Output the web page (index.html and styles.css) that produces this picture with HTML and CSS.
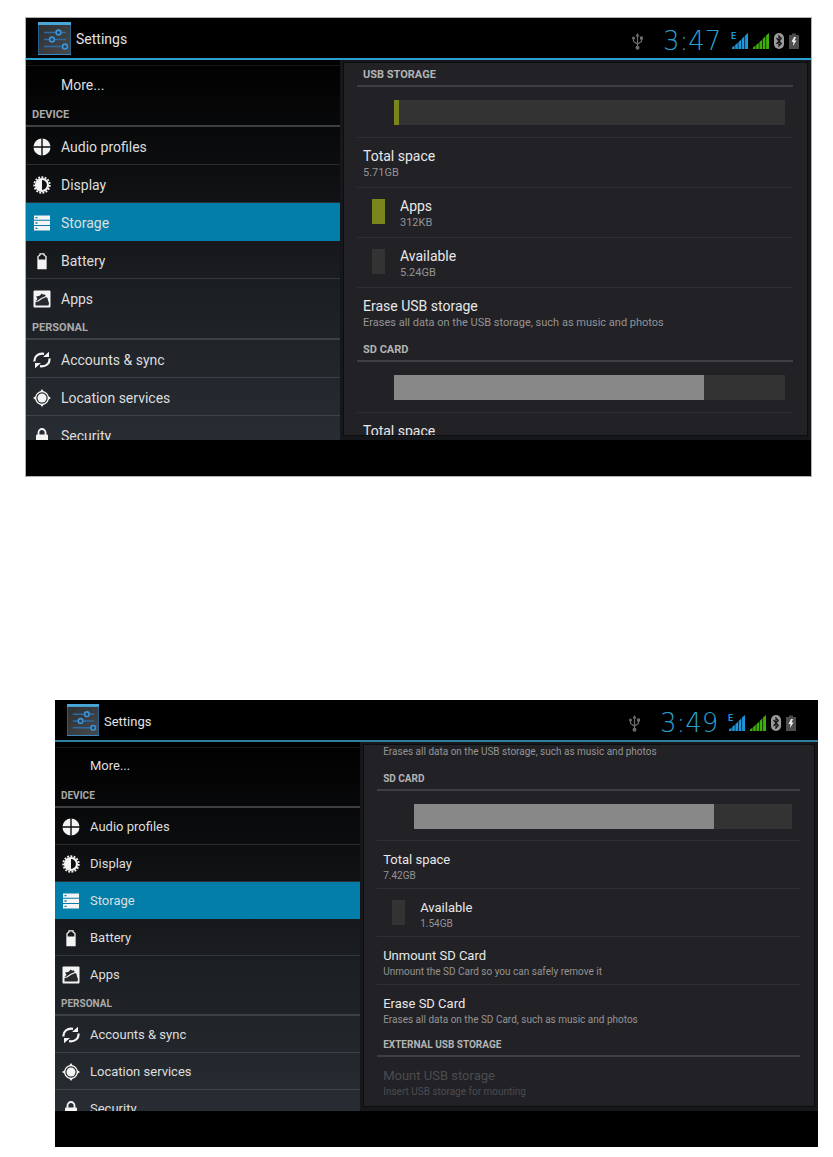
FILE: index.html
```html
<!DOCTYPE html>
<html lang="en">
  <head>
    <meta charset="UTF-8">
    <meta name="viewport" content="width=device-width, initial-scale=1">
    <title>Settings</title>
    <link rel="stylesheet" href="styles.css">
  </head>
  <body>
    <!-- shared icons -->
    <svg class="sprite" aria-hidden="true">
      <defs>
        <linearGradient id="tile" x1="0" y1="0" x2="1" y2="1">
          <stop offset="0" stop-color="#2c2f33"/>
          <stop offset="1" stop-color="#484a4c"/>
        </linearGradient>
      </defs>
      <symbol id="i-settings" viewBox="0 0 33 33">
        <rect x="0.5" y="0.5" width="32" height="32" fill="url(#tile)" stroke="#27618c"/>
        <rect x="0" y="0" width="33" height="3" fill="#48a6d8"/>
        <path d="M0 32.5H33" stroke="#3b86bd"/>
        <path d="M6 10.5H18M23 10.5H28M6 17.5H11M17 17.5H28M6 24.500H25" stroke="#2c6ca5" stroke-width="1.5"/>
        <g fill="#26435c" stroke="#3d93d4" stroke-width="1.6">
          <circle cx="20.500" cy="10.500" r="2.400"/>
          <circle cx="14" cy="17.500" r="2.400"/>
          <circle cx="27" cy="24.500" r="2.400"/>
        </g>
      </symbol>
      <symbol id="i-audio" viewBox="0 0 18 18">
        <path d="M8.300 8.300V0.500A8.500 8.500 0 0 0 0.500 8.300zM9.700 8.300H17.500A8.500 8.500 0 0 0 9.700 0.500zM8.300 9.700H0.500A8.500 8.500 0 0 0 8.300 17.500zM9.700 9.700V17.500A8.500 8.500 0 0 0 17.500 9.700z" fill="currentColor"/>
      </symbol>
      <symbol id="i-display" viewBox="0 0 18 18">
        <circle cx="9" cy="9" r="7.800" fill="none" stroke="currentColor" stroke-width="1.800" stroke-dasharray="1.900 1.367"/>
        <path d="M9 3A6 6 0 0 0 9 15z" fill="currentColor"/>
        <circle cx="9" cy="9" r="6" fill="none" stroke="currentColor" stroke-width="2.200"/>
      </symbol>
      <symbol id="i-storage" viewBox="0 0 18 18">
        <path d="M1 1.500h16v4.300H1zM1 6.800h16v4.300H1zM1 12.100h16v4.300H1z" fill="currentColor"/>
        <path d="M2.500 3.700h2M2.500 9h2M2.500 14.300h2" stroke="#037ea9" stroke-width="1.300"/>
      </symbol>
      <symbol id="i-battery" viewBox="0 0 18 18">
        <path d="M5 16.500V4.500L7 3V1.800H11V3L13 4.500V16.500z" fill="none" stroke="currentColor" stroke-width="1.300"/>
        <path d="M5 7.500H13V16.500H5z" fill="currentColor"/>
      </symbol>
      <symbol id="i-apps" viewBox="0 0 18 18">
        <rect x="0.500" y="0.500" width="17" height="17" rx="1" fill="currentColor"/>
        <path d="M2.500 15.500V11L4.500 9 3 6.500 6 6 7.500 5 8.500 3.500 10 4.500 12 4.500 13 7 14.500 8 15 10.500 16 13 15.500 15.500z" fill="#25292d"/>
        <path d="M2 11.500 5 11 8.500 8.500 13 6.500" stroke="currentColor" stroke-width="1.200" fill="none"/>
      </symbol>
      <symbol id="i-sync" viewBox="0 0 18 18">
        <path d="M1.500 10.500C1 5.500 5 2 11 2.800M16.500 7.500C17 12.500 13 16 7 15.200" fill="none" stroke="currentColor" stroke-width="2.200"/>
        <path d="M10 6 16 0.800V6zM8 12 2 17.200V12z" fill="currentColor"/>
      </symbol>
      <symbol id="i-location" viewBox="0 0 18 18">
        <circle cx="9" cy="9" r="6.300" fill="none" stroke="currentColor" stroke-width="1.200"/>
        <circle cx="9" cy="9" r="4.500" fill="currentColor"/>
        <path d="M9 0 11 3H7zM9 18 11 15H7zM0 9 3 7V11zM18 9 15 7V11z" fill="currentColor"/>
      </symbol>
      <symbol id="i-lock" viewBox="0 0 18 18">
        <path d="M5.500 8V5.500a3.500 3.500 0 0 1 7 0V8" fill="none" stroke="currentColor" stroke-width="1.800"/>
        <rect x="3" y="7.500" width="12" height="9.500" rx="1" fill="currentColor"/>
      </symbol>
      <symbol id="i-usb" viewBox="0 0 11 17">
        <path d="M5.500 1V15M1.500 5V8.500L5.500 11 9.500 8.500V5" fill="none" stroke="currentColor" stroke-width="1.200"/>
        <path d="M5.500 0 7.500 3.500H3.500z" fill="currentColor"/>
        <circle cx="1.500" cy="5" r="1.500" fill="currentColor"/>
        <path d="M8 3.500h3v3H8z" fill="currentColor"/>
        <circle cx="5.500" cy="14.800" r="2" fill="currentColor"/>
      </symbol>
      <symbol id="i-signal" viewBox="0 0 16 16">
        <path d="M0 16V14.500L2.600 12.500V16zM3.200 16V12L5.800 9.700V16zM6.400 16V9.200L9 6.700V16zM9.700 16V6L12.400 3.300V16zM13.100 16V2.600L16 0V16z" fill="currentColor"/>
      </symbol>
      <symbol id="i-bluetooth" viewBox="0 0 10 16">
        <rect width="10" height="16" rx="5" fill="#9a9a9a"/>
        <path d="M2.500 5 7.300 10.500 5 13V3L7.300 5.500 2.500 11" fill="none" stroke="#151515" stroke-width="1.200"/>
      </symbol>
      <symbol id="i-charge" viewBox="0 0 10 16">
        <path d="M0 2H3V0.500H7V2H10V16H0z" fill="#4d4d4d"/>
        <path d="M5 4 2.500 9H4.500L4 13 7.500 7.500H5.500L7 4z" fill="#f0f0f0"/>
      </symbol>
    </svg>

    <section class="screen">
      <header class="bar">
        <svg class="bar-icon"><use href="#i-settings"/></svg>
        <h1 class="bar-title">Settings</h1>
        <div class="status">
          <svg class="usb"><use href="#i-usb"/></svg>
          <span class="clock">3:47</span>
          <span class="signal signal-data"><small>E</small><svg><use href="#i-signal"/></svg></span>
          <span class="signal"><svg><use href="#i-signal"/></svg></span>
          <svg class="pill"><use href="#i-bluetooth"/></svg>
          <svg class="pill"><use href="#i-charge"/></svg>
        </div>
      </header>
      <div class="main">
        <nav class="menu">
          <a class="item" href="#">More...</a>
          <h2 class="group">DEVICE</h2>
          <a class="item" href="#"><svg><use href="#i-audio"/></svg>Audio profiles</a>
          <a class="item" href="#"><svg><use href="#i-display"/></svg>Display</a>
          <a class="item active" href="#"><svg><use href="#i-storage"/></svg>Storage</a>
          <a class="item" href="#"><svg><use href="#i-battery"/></svg>Battery</a>
          <a class="item last" href="#"><svg><use href="#i-apps"/></svg>Apps</a>
          <h2 class="group">PERSONAL</h2>
          <a class="item" href="#"><svg><use href="#i-sync"/></svg>Accounts &amp; sync</a>
          <a class="item" href="#"><svg><use href="#i-location"/></svg>Location services</a>
          <a class="item" href="#"><svg><use href="#i-lock"/></svg>Security</a>
        </nav>
        <div class="panel">
          <div class="panel-body">
            <h2 class="section">USB STORAGE</h2>
            <div class="usage"><div class="track"><div class="fill apps" style="width: 1.2%"></div></div></div>
            <div class="row"><strong>Total space</strong><span>5.71GB</span></div>
            <div class="row keyed apps"><strong>Apps</strong><span>312KB</span></div>
            <div class="row keyed"><strong>Available</strong><span>5.24GB</span></div>
            <button class="row last"><strong>Erase USB storage</strong><span>Erases all data on the USB storage, such as music and photos</span></button>
            <h2 class="section">SD CARD</h2>
            <div class="usage"><div class="track"><div class="fill" style="width: 79.3%"></div></div></div>
            <div class="row"><strong>Total space</strong></div>
          </div>
        </div>
      </div>
    </section>

    <section class="screen second">
      <header class="bar">
        <svg class="bar-icon"><use href="#i-settings"/></svg>
        <h1 class="bar-title">Settings</h1>
        <div class="status">
          <svg class="usb"><use href="#i-usb"/></svg>
          <span class="clock">3:49</span>
          <span class="signal signal-data"><small>E</small><svg><use href="#i-signal"/></svg></span>
          <span class="signal"><svg><use href="#i-signal"/></svg></span>
          <svg class="pill"><use href="#i-bluetooth"/></svg>
          <svg class="pill"><use href="#i-charge"/></svg>
        </div>
      </header>
      <div class="main">
        <nav class="menu">
          <a class="item" href="#">More...</a>
          <h2 class="group">DEVICE</h2>
          <a class="item" href="#"><svg><use href="#i-audio"/></svg>Audio profiles</a>
          <a class="item" href="#"><svg><use href="#i-display"/></svg>Display</a>
          <a class="item active" href="#"><svg><use href="#i-storage"/></svg>Storage</a>
          <a class="item" href="#"><svg><use href="#i-battery"/></svg>Battery</a>
          <a class="item last" href="#"><svg><use href="#i-apps"/></svg>Apps</a>
          <h2 class="group">PERSONAL</h2>
          <a class="item" href="#"><svg><use href="#i-sync"/></svg>Accounts &amp; sync</a>
          <a class="item" href="#"><svg><use href="#i-location"/></svg>Location services</a>
          <a class="item" href="#"><svg><use href="#i-lock"/></svg>Security</a>
        </nav>
        <div class="panel">
          <div class="panel-body">
            <div class="row tail"><span>Erases all data on the USB storage, such as music and photos</span></div>
            <h2 class="section">SD CARD</h2>
            <div class="usage"><div class="track"><div class="fill" style="width: 79.3%"></div></div></div>
            <div class="row"><strong>Total space</strong><span>7.42GB</span></div>
            <div class="row keyed"><strong>Available</strong><span>1.54GB</span></div>
            <button class="row"><strong>Unmount SD Card</strong><span>Unmount the SD Card so you can safely remove it</span></button>
            <button class="row last"><strong>Erase SD Card</strong><span>Erases all data on the SD Card, such as music and photos</span></button>
            <h2 class="section">EXTERNAL USB STORAGE</h2>
            <button class="row last" disabled><strong>Mount USB storage</strong><span>Insert USB storage for mounting</span></button>
          </div>
        </div>
      </div>
    </section>
  </body>
</html>
```
FILE: styles.css
```css
* {
  box-sizing: border-box;
}

body {
  margin: 0;
  padding: 18px 15px 10px 26px;
  background: #fff;
  font-family: Roboto, "Liberation Sans", sans-serif;
}

h1, h2 {
  margin: 0;
}

.sprite {
  position: absolute;
  width: 0;
  height: 0;
}

.screen {
  --item: 38px;
  --row: 50px;
  --usage: 51px;
  --text: 14px;
  --small: 11px;
  --main: 380px;
  --edge: 12px;
  --icon: 33px;
  --accent: #2a9fd0;
  margin-right: 7px;
  padding-bottom: 36px;
  background: #000;
  box-shadow: 0 0 0 1px #b0b0b0;
}

.screen.second {
  --item: 37px;
  --row: 48px;
  --usage: 50px;
  --text: 13px;
  --small: 10px;
  --main: 369px;
  --edge: 22px;
  --icon: 32px;
  --accent: #2f7f9f;
  margin: 224px 0 0 29px;
  box-shadow: none;
}

/* title bar */
.bar {
  display: flex;
  align-items: center;
  height: 42px;
  padding: 0 var(--edge) 0 12px;
  border-bottom: 2px solid var(--accent);
}

.bar-icon {
  width: var(--icon);
  height: var(--icon);
}

.bar-title {
  margin-left: 5px;
  padding-top: 2px;
  color: #e4e4e4;
  font-size: var(--text);
  font-weight: normal;
}

.status {
  display: flex;
  align-items: center;
  gap: 5px;
  margin-left: auto;
  padding-top: 6px;
}

.usb {
  width: 11px;
  height: 17px;
  margin-right: 15px;
  color: #6c6c6c;
}

.clock {
  width: 64px;
  color: #2a9fd0;
  font: 200 26px/17px "DejaVu Sans", sans-serif;
}

.signal {
  position: relative;
  height: 16px;
  color: #3fae0c;
}

.signal svg {
  display: block;
  width: 16px;
  height: 16px;
}

.signal-data {
  color: #1c97dc;
}

.signal small {
  position: absolute;
  top: -1px;
  left: -1px;
  font-size: 9px;
  font-weight: bold;
  line-height: 9px;
}

.pill {
  width: 10px;
  height: 16px;
}

/* two columns */
.main {
  display: grid;
  grid-template-columns: 2fr 3fr;
  height: var(--main);
}

.menu {
  height: var(--main);
  padding-top: 5px;
  overflow: hidden;
  background: linear-gradient(#000, #0b0c0e 25%, #1b1e22 60%, #282d33);
}

.item {
  display: flex;
  align-items: center;
  height: var(--item);
  padding: 2px 0 0 7px;
  border-bottom: 1px solid rgba(255, 255, 255, 0.12);
  color: #dedede;
  font-size: var(--text);
  line-height: 20px;
  text-decoration: none;
}

.item:first-child {
  padding: 0 0 0 35px;
  border-top: 1px solid #15181a;
}

.item:first-child, .item.last {
  border-bottom: 0;
}

.item.last {
  height: calc(var(--item) - 1px);
}

.item svg {
  width: 18px;
  height: 18px;
  margin-right: 10px;
  color: #f4f4f4;
}

.item.active {
  border-color: #037ea9;
  background: #037ea9;
}

.group, .section {
  height: 24px;
  padding-left: 6px;
  border-bottom: 2px solid #3d4043;
  color: #aaa;
  font-size: var(--small);
  font-weight: bold;
  line-height: 24px;
}

/* storage details */
.panel {
  height: var(--main);
  padding: 2px 3px 4px;
  background: #15171a;
}

.panel-body {
  height: 100%;
  padding: 0 14px 0 13px;
  overflow: hidden;
  border: 1px solid #0c0d0f;
  background: #222126;
}

.section {
  color: #b4b4b4;
}

.usage {
  height: var(--usage);
  padding: 13px 8px 0 37px;
  border-bottom: 1px solid #303034;
}

.track {
  height: 25px;
  background: #333;
}

.fill {
  height: 100%;
  background: #888;
}

.fill.apps {
  background: #7a861c;
}

.row {
  display: flex;
  flex-direction: column;
  justify-content: flex-start;
  align-items: flex-start;
  width: 100%;
  height: var(--row);
  margin: 0;
  padding: 9px 6px 0;
  border: 0;
  border-bottom: 1px solid #303034;
  background: none;
  color: #e8e8e8;
  font-family: inherit;
  text-align: left;
}

.row.last, .row.tail {
  border-bottom: 0;
}

.row.tail {
  height: 22px;
  padding-top: 0;
}

.row strong {
  font-size: var(--text);
  font-weight: normal;
  line-height: 19px;
}

.row span {
  color: #949494;
  font-size: var(--small);
  line-height: 14px;
}

.row.keyed {
  padding-left: 43px;
  background: linear-gradient(#333, #333) 15px 11px / 13px 25px no-repeat;
}

.row.keyed.apps {
  background-image: linear-gradient(#7a861c, #7a861c);
}

.row:disabled strong, .row:disabled span {
  color: #4c4c50;
}
```
